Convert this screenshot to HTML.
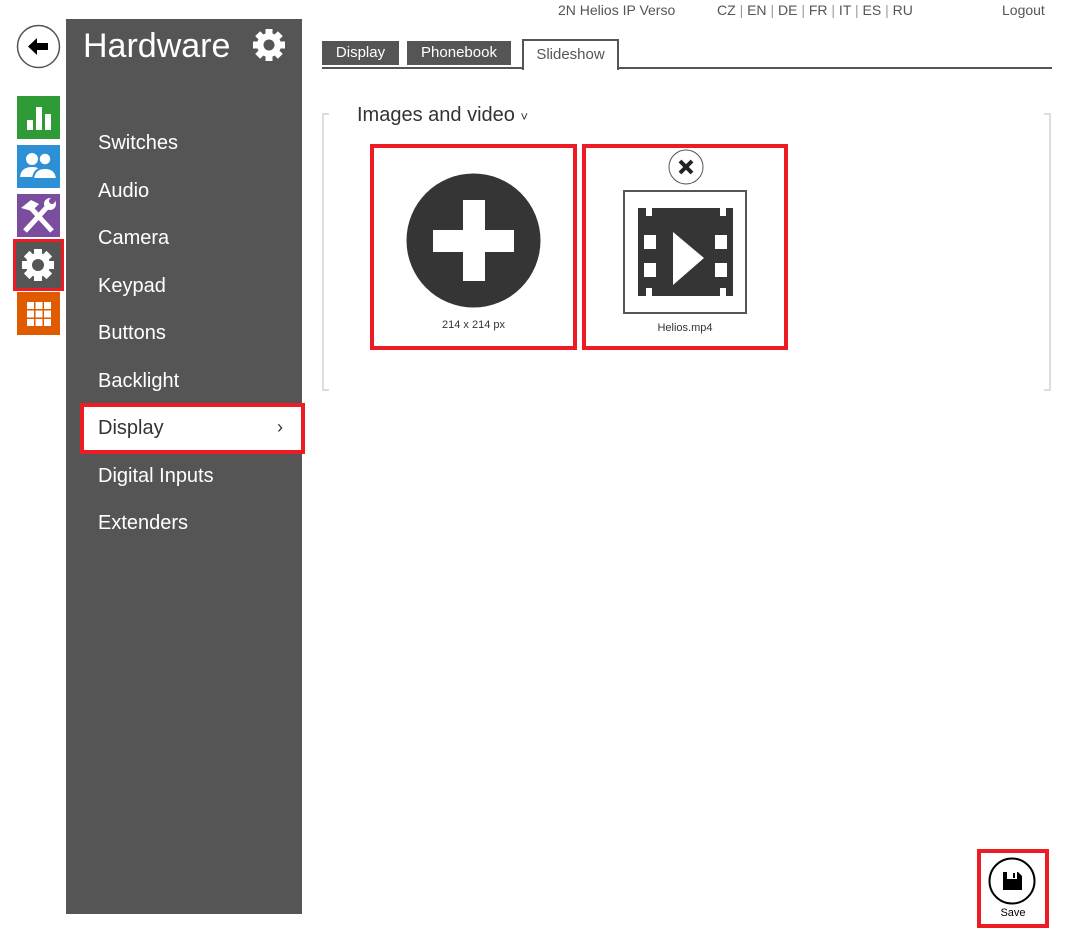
<!DOCTYPE html>
<html><head><meta charset="utf-8"><style>
*{margin:0;padding:0;box-sizing:border-box}
body{width:1083px;height:929px;background:#fff;font-family:"Liberation Sans",sans-serif;position:relative;overflow:hidden;color:#333}
.a{position:absolute}
.side{left:66px;top:19px;width:236px;height:895px;background:#555}
.nav{position:absolute;left:98px;color:#fff;font-size:20px}
.tab{position:absolute;top:41px;height:24px;background:#555;color:#fff;font-size:15px;text-align:center;line-height:24px}
.sq{position:absolute;left:17px;width:43px;height:43px}
.red{position:absolute;border:4px solid #ed1c24}
</style></head><body>
<div class="a" style="left:558px;top:2px;font-size:14px;color:#555">2N Helios IP Verso</div>
<div class="a" style="left:717px;top:2px;font-size:14px;color:#555">CZ <span style="color:#99a">|</span> EN <span style="color:#99a">|</span> DE <span style="color:#99a">|</span> FR <span style="color:#99a">|</span> IT <span style="color:#99a">|</span> ES <span style="color:#99a">|</span> RU</div>
<div class="a" style="left:1002px;top:2px;font-size:14px;color:#555">Logout</div>

<svg class="a" style="left:16px;top:24px" width="45" height="45" viewBox="0 0 45 45"><circle cx="22.5" cy="22.5" r="21" fill="#fff" stroke="#555" stroke-width="1.5"/><path d="M12 22.5 L21 14 L21 19 L32 19 L32 26 L21 26 L21 31 Z" fill="#000"/></svg>

<div class="sq" style="top:96px;background:#2e9b37"><svg width="43" height="43"><rect x="10" y="24" width="6" height="10" fill="#fff"/><rect x="19" y="11" width="6" height="23" fill="#fff"/><rect x="28" y="18" width="6" height="16" fill="#fff"/></svg></div>
<div class="sq" style="top:145px;background:#2d8fd5"><svg width="43" height="43"><circle cx="15" cy="14" r="6" fill="#fff"/><circle cx="28" cy="14" r="6" fill="#fff"/><path d="M3 32 Q4 22 15 22 Q26 22 27 32Z" fill="#fff"/><path d="M16 34 Q17 23 28 23 Q39 23 40 34Z" fill="#fff" stroke="#2d8fd5" stroke-width="2"/><circle cx="28" cy="14" r="6" fill="#fff" stroke="#2d8fd5" stroke-width="1.5"/></svg></div>
<div class="sq" style="top:194px;background:#7b4d9f"><svg width="43" height="43"><path d="M8 37 L32 11" stroke="#fff" stroke-width="5"/><path d="M35 37 L14 14" stroke="#fff" stroke-width="5"/><path d="M4 14 L14 6 L22 10 L15 17 Z" fill="#fff"/><circle cx="33" cy="10" r="6" fill="#fff"/><circle cx="35" cy="7" r="3" fill="#7b4d9f"/></svg></div>
<div class="red" style="left:13px;top:239px;width:51px;height:52px;background:#555;border-width:3px"></div>
<svg class="a" style="left:19px;top:246px" width="38" height="38" viewBox="-19 -19 38 38"><g fill="#fff"><rect x="-4" y="-16" width="8" height="32"/><rect x="-4" y="-16" width="8" height="32" transform="rotate(45)"/><rect x="-4" y="-16" width="8" height="32" transform="rotate(90)"/><rect x="-4" y="-16" width="8" height="32" transform="rotate(135)"/><circle r="12"/></g><circle r="6" fill="#555"/></svg>
<div class="sq" style="top:292px;background:#e05a00"><svg width="43" height="43"><g fill="#fff"><rect x="10" y="10" width="7" height="7"/><rect x="18.5" y="10" width="7" height="7"/><rect x="27" y="10" width="7" height="7"/><rect x="10" y="18.5" width="7" height="7"/><rect x="18.5" y="18.5" width="7" height="7"/><rect x="27" y="18.5" width="7" height="7"/><rect x="10" y="27" width="7" height="7"/><rect x="18.5" y="27" width="7" height="7"/><rect x="27" y="27" width="7" height="7"/></g></svg></div>

<div class="a side"></div>
<div class="a" style="left:83px;top:27px;font-size:34px;color:#fff">Hardware</div>
<svg class="a" style="left:252px;top:28px" width="34" height="34" viewBox="-17 -17 34 34"><g fill="#fff"><rect x="-3.5" y="-16" width="7" height="32"/><rect x="-3.5" y="-16" width="7" height="32" transform="rotate(45)"/><rect x="-3.5" y="-16" width="7" height="32" transform="rotate(90)"/><rect x="-3.5" y="-16" width="7" height="32" transform="rotate(135)"/><circle r="12"/></g><circle r="5.5" fill="#555"/></svg>
<div class="nav" style="top:132px">Switches</div>
<div class="nav" style="top:180px">Audio</div>
<div class="nav" style="top:227px">Camera</div>
<div class="nav" style="top:275px">Keypad</div>
<div class="nav" style="top:322px">Buttons</div>
<div class="nav" style="top:370px">Backlight</div>
<div class="red" style="left:80px;top:403px;width:225px;height:51px;background:#fff"></div>
<div class="nav" style="top:417px;color:#333">Display</div>
<div class="a" style="left:277px;top:417px;font-size:18px;color:#333">›</div>
<div class="nav" style="top:465px">Digital Inputs</div>
<div class="nav" style="top:512px">Extenders</div>

<div class="tab" style="left:322px;width:77px">Display</div>
<div class="tab" style="left:407px;width:104px">Phonebook</div>
<div class="a" style="left:322px;top:67px;width:730px;height:2px;background:#555"></div>
<div class="a" style="left:522px;top:39px;width:97px;height:31px;border:2px solid #555;border-bottom:none;background:#fff;font-size:15px;color:#555;text-align:center;line-height:28px">Slideshow</div>

<div class="a" style="left:322px;top:113px;width:7px;height:278px;border:2px solid #ddd;border-right:none"></div>
<div class="a" style="left:1044px;top:113px;width:7px;height:278px;border:2px solid #ddd;border-left:none"></div>
<div class="a" style="left:357px;top:104px;font-size:20px;color:#333">Images and video <span style="font-size:13px">˅</span></div>

<div class="red" style="left:370px;top:144px;width:207px;height:206px"></div>
<svg class="a" style="left:406px;top:173px" width="135" height="135"><circle cx="67.5" cy="67.5" r="67" fill="#353535"/><rect x="57" y="27" width="22" height="81" fill="#fff"/><rect x="27" y="57" width="81" height="22" fill="#fff"/></svg>
<div class="a" style="left:370px;top:319px;width:207px;text-align:center;font-size:11px">214 x 214 px</div>

<div class="red" style="left:582px;top:144px;width:206px;height:206px"></div>
<svg class="a" style="left:668px;top:149px" width="36" height="36"><circle cx="18" cy="18" r="17" fill="#fff" stroke="#555" stroke-width="1"/><path d="M12 12 L24 24 M24 12 L12 24" stroke="#222" stroke-width="4"/></svg>
<div class="a" style="left:623px;top:190px;width:124px;height:124px;border:2px solid #555"></div>
<svg class="a" style="left:638px;top:208px" width="95" height="88"><path d="M0 0H8V8H14V0H82V8H88V0H95V88H88V80H82V88H14V80H8V88H0Z" fill="#353535"/><g fill="#fff"><rect x="6" y="27" width="12" height="14"/><rect x="6" y="55" width="12" height="14"/><rect x="77" y="27" width="12" height="14"/><rect x="77" y="55" width="12" height="14"/></g><path d="M35 24 L66 50 L35 77Z" fill="#fff"/></svg>
<div class="a" style="left:582px;top:322px;width:206px;text-align:center;font-size:11px">Helios.mp4</div>

<div class="red" style="left:977px;top:849px;width:72px;height:79px"></div>
<svg class="a" style="left:988px;top:857px" width="48" height="48"><circle cx="24" cy="24" r="22.5" fill="#fff" stroke="#000" stroke-width="2"/><path d="M15 15H30L34 19V33H15Z" fill="#000"/><rect x="19" y="15" width="10" height="7" fill="#fff"/><rect x="25" y="16" width="2" height="5" fill="#000"/></svg>
<div class="a" style="left:977px;top:907px;width:72px;text-align:center;font-size:11px;color:#000">Save</div>
</body></html>
